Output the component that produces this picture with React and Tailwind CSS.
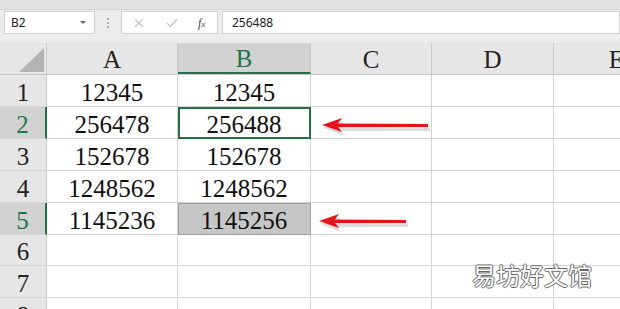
import React from 'react';

const serif = { fontFamily: '"Liberation Serif", "Times New Roman", serif' };

const cols = [
  { key: 'A', w: 'w-[131px]' },
  { key: 'B', w: 'w-[133px]' },
  { key: 'C', w: 'w-[121px]' },
  { key: 'D', w: 'w-[122px]' },
  { key: 'E', w: 'w-[126px]' },
];

const rows = [
  { n: 1, a: '12345', b: '12345', h: 'h-[32px]' },
  { n: 2, a: '256478', b: '256488', h: 'h-[32px]', active: true },
  { n: 3, a: '152678', b: '152678', h: 'h-[32px]' },
  { n: 4, a: '1248562', b: '1248562', h: 'h-[32px]' },
  { n: 5, a: '1145236', b: '1145256', h: 'h-[32px]', marked: true },
  { n: 6, a: '', b: '', h: 'h-[31px]' },
  { n: 7, a: '', b: '', h: 'h-[32px]' },
  { n: 8, a: '', b: '', h: 'h-[32px]' },
];

function Arrow({ className, length }) {
  return (
    <svg className={className} width={length + 10} height="24" viewBox={`0 0 ${length + 10} 24`}>
      <g transform="translate(2 3)" fill="#9a9a9a" opacity="0.35">
        <path d={`M0 9 L20 2 L17 8 L${length} 8.5 L${length} 12 L17 12 L20 17 Z`} />
      </g>
      <path d={`M0 9 L20 2 L16 7.5 L${length} 8 L${length} 11 L16 11 L20 16 Z`} fill="#e3141b" />
    </svg>
  );
}

export default function App() {
  return (
    <div className="relative w-[620px] h-[309px] overflow-hidden bg-white" style={serif}>
      <div className="h-[10px] bg-[#e1e1e1] border-b border-[#d4d4d4]" />
      <div className="h-[33px] bg-[#ececec] flex items-start pt-px" style={{ fontFamily: '"Noto Sans", "Liberation Sans", sans-serif' }}>
        <div className="ml-[4px] w-[91px] h-[23px] bg-white border border-[#d0d0d0] flex items-center justify-between px-[6px] text-[12px] text-[#222]">
          <span>B2</span>
          <span className="w-0 h-0 border-l-[3px] border-r-[3px] border-t-[3px] border-l-transparent border-r-transparent border-t-[#666] mr-[2px]" />
        </div>
        <div className="w-[26px] h-[23px] flex flex-col items-center justify-center gap-[2px]">
          <span className="w-[2px] h-[2px] bg-[#b0b0b0]" />
          <span className="w-[2px] h-[2px] bg-[#b0b0b0]" />
          <span className="w-[2px] h-[2px] bg-[#b0b0b0]" />
        </div>
        <div className="w-[97px] h-[23px] bg-white border border-[#d0d0d0] flex items-center">
          <svg className="ml-[12px]" width="10" height="10" viewBox="0 0 10 10">
            <path d="M1 1 L9 9 M9 1 L1 9" stroke="#c4c4c4" strokeWidth="1.2" />
          </svg>
          <svg className="ml-[22px]" width="12" height="10" viewBox="0 0 12 10">
            <path d="M1 5 L4.5 8.5 L11 1" stroke="#c4c4c4" strokeWidth="1.4" fill="none" />
          </svg>
          <span className="ml-[20px] text-[12px] italic text-[#444]" style={serif}>
            f<span className="text-[9px]">x</span>
          </span>
        </div>
        <div className="ml-[4px] flex-1 h-[23px] bg-white border border-[#d0d0d0] flex items-center pl-[9px] text-[12px] text-[#222]">
          256488
        </div>
      </div>

      <div className="flex h-[32px] bg-[#e6e6e6] border-b border-[#c8c8c8]">
        <div className="w-[47px] shrink-0 border-r border-[#c8c8c8] relative">
          <svg className="absolute left-[19px] top-[5px]" width="25" height="24" viewBox="0 0 25 24">
            <path d="M25 0 L25 24 L0 24 Z" fill="#b4b4b4" />
          </svg>
        </div>
        {cols.map((c) => (
          <div
            key={c.key}
            className={`${c.w} shrink-0 flex items-center justify-center text-[25px] leading-none pt-[1px] ${
              c.key === 'B'
                ? 'bg-[#d2d2d2] text-[#217346] border-b-2 border-[#217346] border-r border-r-[#c8c8c8]'
                : 'text-[#222] border-r border-[#c8c8c8]'
            }`}
          >
            {c.key}
          </div>
        ))}
      </div>

      {rows.map((r) => {
        const hl = r.active || r.marked;
        return (
          <div key={r.n} className={`flex ${r.h}`}>
            <div
              className={`w-[47px] shrink-0 flex items-center justify-center text-[25px] leading-none pt-[3px] border-b border-[#d4d4d4] ${
                hl
                  ? 'bg-[#d2d2d2] text-[#217346] border-r-2 border-r-[#217346]'
                  : 'bg-[#e6e6e6] text-[#222] border-r border-r-[#c8c8c8]'
              }`}
            >
              {r.n}
            </div>
            <div className="w-[131px] shrink-0 flex items-center justify-center text-[25px] leading-none pt-[3px] text-[#111] border-r border-b border-[#d4d4d4]">
              {r.a}
            </div>
            <div
              className={`w-[133px] shrink-0 flex items-center justify-center text-[25px] leading-none pt-[3px] text-[#111] border-r border-b ${
                r.active
                  ? 'border-[#d4d4d4] outline-2 outline-[#217346] -outline-offset-2'
                  : r.marked
                  ? 'bg-[#c6c6c6] border-[#a8a8a8] outline-1 outline-[#a0a0a0] -outline-offset-1'
                  : 'border-[#d4d4d4]'
              }`}
            >
              {r.b}
            </div>
            <div className="w-[121px] shrink-0 border-r border-b border-[#d4d4d4]" />
            <div className="w-[122px] shrink-0 border-r border-b border-[#d4d4d4]" />
            <div className="w-[126px] shrink-0 border-r border-b border-[#d4d4d4]" />
          </div>
        );
      })}

      <Arrow className="absolute left-[322px] top-[116px]" length={106} />
      <Arrow className="absolute left-[319px] top-[212px]" length={87} />

      <div
        className="absolute left-[472px] top-[263px] text-[24px] leading-none text-white [text-shadow:1px_0_#666,-1px_0_#666,0_1px_#666,0_-1px_#666]"
        style={{ fontFamily: '"Noto Sans CJK SC", sans-serif' }}
      >
        易坊好文馆
      </div>
    </div>
  );
}
